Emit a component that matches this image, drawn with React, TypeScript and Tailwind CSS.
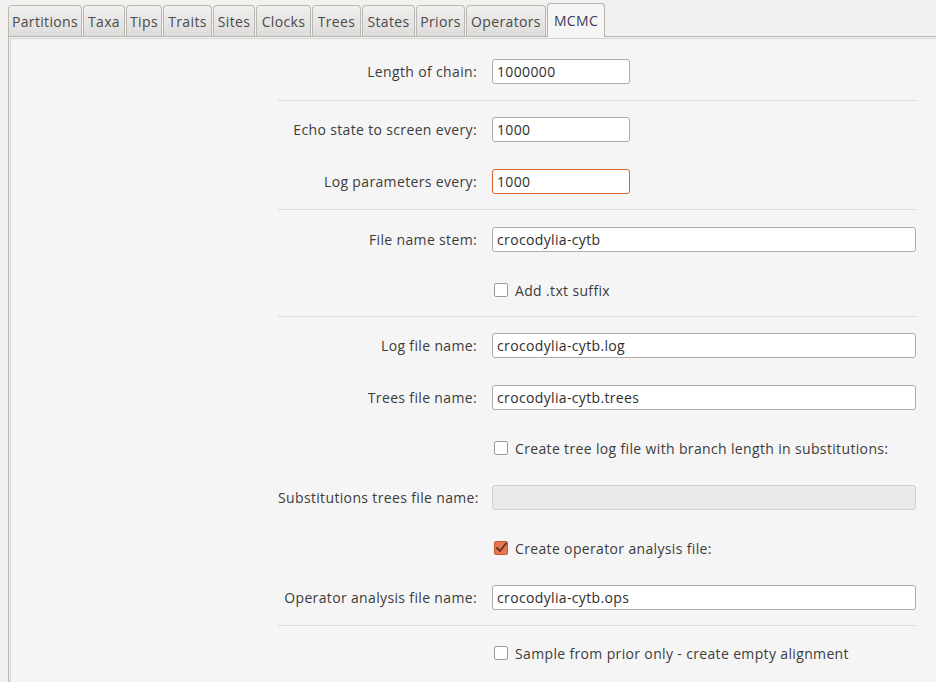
import React from 'react';

const tabs: [string, string][] = [
  ['Partitions', 'w-[74px]'],
  ['Taxa', 'w-[42px]'],
  ['Tips', 'w-[36px]'],
  ['Traits', 'w-[49px]'],
  ['Sites', 'w-[42px]'],
  ['Clocks', 'w-[55px]'],
  ['Trees', 'w-[49px]'],
  ['States', 'w-[53px]'],
  ['Priors', 'w-[49px]'],
  ['Operators', 'w-[80px]'],
];

function Field({ label, value, short, focused, disabled, mt }: { label: string; value?: string; short?: boolean; focused?: boolean; disabled?: boolean; mt: string }) {
  return (
    <div className={`flex items-center h-[25px] ${mt}`}>
      <div className="w-[200px] text-right text-[#3c3c3c] pr-[1px] whitespace-nowrap">{label}</div>
      <div className="ml-[14px] flex-1">
        <div
          className={`h-[25px] rounded-[3px] border flex items-center pl-[4px] text-[#2e2e2e] ${short ? 'w-[138px]' : 'w-full'} ${
            focused ? 'border-[#d4632f] bg-white' : disabled ? 'border-[#d2d0cc] bg-[#ebeae8]' : 'border-[#aeaca7] bg-white'
          }`}
        >
          {value}
        </div>
      </div>
    </div>
  );
}

function Check({ label, checked, mt }: { label: string; checked?: boolean; mt: string }) {
  return (
    <div className={`flex items-center h-[26px] ${mt}`}>
      <div className="w-[200px]" />
      <div className="ml-[16px] flex items-center gap-[7px]">
        {checked ? (
          <div className="w-[14px] h-[14px] rounded-[2px] bg-[#e57650] border border-[#c05a35] flex items-center justify-center">
            <svg width="12" height="12" viewBox="0 0 12 12">
              <path d="M2 6 L5 9 L11 1.5" fill="none" stroke="#6a3423" strokeWidth="2" strokeLinecap="round" strokeLinejoin="round" />
            </svg>
          </div>
        ) : (
          <div className="w-[14px] h-[14px] rounded-[2px] bg-white border border-[#9c9a95]" />
        )}
        <span className="text-[#3c3c3c] whitespace-nowrap">{label}</span>
      </div>
    </div>
  );
}

function Sep({ mt }: { mt: string }) {
  return <div className={`h-px bg-[#dcdbd8] ${mt}`} />;
}

export default function App() {
  return (
    <div className="w-[936px] h-[682px] overflow-hidden bg-[#f2f1f0] font-['Open_Sans',sans-serif] text-[14px] tracking-[0.35px]">
      <div className="flex items-end pl-[8px] h-[36px]">
        {tabs.map(([t, w]) => (
          <div
            key={t}
            className={`${w} h-[31px] mr-px flex items-center justify-center border border-b-0 border-[#bab8b3] rounded-t-[4px] bg-gradient-to-b from-[#f1f0ee] to-[#dddcda] text-[#4a4a4a]`}
          >
            {t}
          </div>
        ))}
        <div className="w-[58px] h-[34px] -mb-px relative z-10 flex items-center justify-center border border-b-0 border-[#b5b3ae] rounded-t-[4px] bg-[#f5f5f5] text-[#3a3a5a]">
          MCMC
        </div>
      </div>
      <div className="ml-[8px] h-[646px] border-t border-l border-[#b5b3ae] bg-[#f5f5f5]">
        <div className="h-full border-t border-l border-[#d4d3cf] ml-px mt-px flex justify-end pr-[20px]">
          <div className="w-[638px] flex flex-col">
            <Field label="Length of chain:" value="1000000" short mt="mt-[20px]" />
            <Sep mt="mt-[16px]" />
            <Field label="Echo state to screen every:" value="1000" short mt="mt-[16px]" />
            <Field label="Log parameters every:" value="1000" short focused mt="mt-[27px]" />
            <Sep mt="mt-[15px]" />
            <Field label="File name stem:" value="crocodylia-cytb" mt="mt-[17px]" />
            <Check label="Add .txt suffix" mt="mt-[25px]" />
            <Sep mt="mt-[13px]" />
            <Field label="Log file name:" value="crocodylia-cytb.log" mt="mt-[16px]" />
            <Field label="Trees file name:" value="crocodylia-cytb.trees" mt="mt-[27px]" />
            <Check label="Create tree log file with branch length in substitutions:" mt="mt-[25px]" />
            <Field label="Substitutions trees file name:" disabled mt="mt-[24px]" />
            <Check label="Create operator analysis file:" checked mt="mt-[25px]" />
            <Field label="Operator analysis file name:" value="crocodylia-cytb.ops" mt="mt-[24px]" />
            <Sep mt="mt-[15px]" />
            <Check label="Sample from prior only - create empty alignment" mt="mt-[14px]" />
          </div>
        </div>
      </div>
    </div>
  );
}
